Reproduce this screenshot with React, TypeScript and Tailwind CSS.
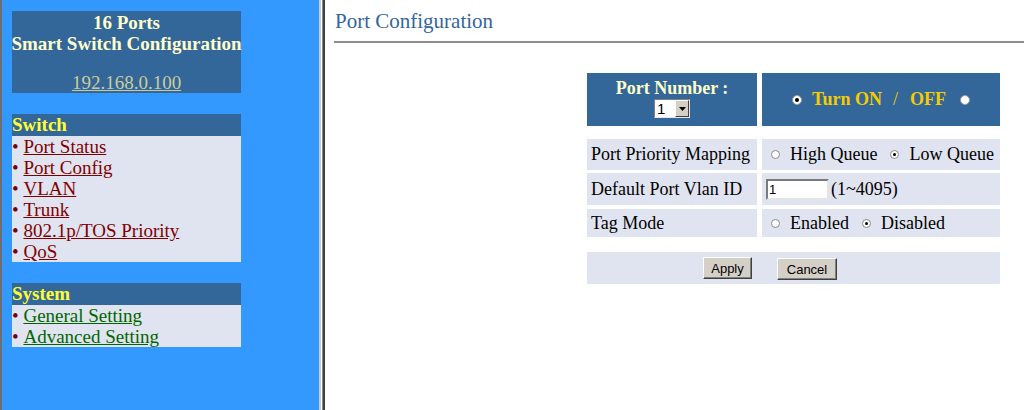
import React from 'react';

interface RadioProps {
  checked?: boolean;
  large?: boolean;
}

const Radio: React.FC<RadioProps> = ({ checked = false, large = false }) => {
  return (
    <span
      className={
        large
          ? 'flex h-[10px] w-[10px] shrink-0 items-center justify-center rounded-full border border-[#9a9a9a] bg-white'
          : 'flex h-[9px] w-[9px] shrink-0 items-center justify-center rounded-full border border-[#8c8c8c] bg-white'
      }
    >
      {checked && (
        <span className={large ? 'h-[4px] w-[4px] rounded-full bg-black' : 'h-[3px] w-[3px] rounded-full bg-black'} />
      )}
    </span>
  );
};

const NavLink: React.FC<{ label: string; color: string }> = ({ label, color }) => (
  <div className="h-[21px] leading-[21px] whitespace-nowrap">
    <span className="text-[#800000]">•&nbsp;</span>
    <a href="#" className={`underline ${color}`}>
      {label}
    </a>
  </div>
);

const Sidebar: React.FC = () => {
  const switchLinks = ['Port Status', 'Port Config', 'VLAN', 'Trunk', '802.1p/TOS Priority', 'QoS'];
  const systemLinks = ['General Setting', 'Advanced Setting'];

  return (
    <aside className="h-full w-[319px] shrink-0 border-l-2 border-[#6e6e6e] bg-[#3399ff] pl-[10px] pt-[11px] text-[19px]">
      {/* Title box */}
      <div className="flex h-[82px] w-[229px] flex-col items-center bg-[#336699] pt-[1px] font-bold leading-[21px] text-[#ffffcc]">
        <div>16 Ports</div>
        <div className="whitespace-nowrap">Smart Switch Configuration</div>
        <a href="#" className="mt-[18px] font-normal text-[#cccc99] underline">
          192.168.0.100
        </a>
      </div>

      {/* Switch menu */}
      <div className="mt-[21px] w-[229px]">
        <div className="h-[22px] bg-[#336699] font-bold leading-[22px] text-[#ffff33]">Switch</div>
        <div className="bg-[#e0e4f0]">
          {switchLinks.map((l) => (
            <NavLink key={l} label={l} color="text-[#800000]" />
          ))}
        </div>
      </div>

      {/* System menu */}
      <div className="mt-[21px] w-[229px]">
        <div className="h-[22px] bg-[#336699] font-bold leading-[22px] text-[#ffff33]">System</div>
        <div className="bg-[#e0e4f0]">
          {systemLinks.map((l) => (
            <NavLink key={l} label={l} color="text-[#006600]" />
          ))}
        </div>
      </div>
    </aside>
  );
};

const FrameDivider: React.FC = () => (
  <div className="flex h-full shrink-0">
    <div className="w-[2px] bg-[#c9cdd3]" />
    <div className="w-[1px] bg-white" />
    <div className="w-[1px] bg-[#8a8a8a]" />
    <div className="w-[2px] bg-[#404040]" />
  </div>
);

const Button: React.FC<{ label: string; width: string }> = ({ label, width }) => (
  <button
    className={`h-[22px] ${width} border border-t-white border-l-white border-r-[#404040] border-b-[#404040] bg-[#d4d0c8] font-['Liberation_Sans',Arial,sans-serif] text-[13px] leading-none text-black shadow-[inset_-1px_-1px_0_#808080]`}
  >
    {label}
  </button>
);

// radio pair used by the light rows
const RadioPair: React.FC<{ first: string; second: string }> = ({ first, second }) => (
  <div className="flex w-[238px] items-center whitespace-nowrap bg-[#e0e4f0] pl-[9px]">
    <Radio />
    <span className="ml-[10px]">{first}</span>
    <span className="ml-[13px]">
      <Radio checked />
    </span>
    <span className="ml-[10px]">{second}</span>
  </div>
);

const PortConfig: React.FC = () => {
  return (
    <main className="h-full flex-1 pl-[9px] pt-[9px]">
      <h1 className="pl-[1px] text-[21px] font-normal leading-[24px] text-[#336699]">Port Configuration</h1>
      <div className="mt-[8px] h-[2px] bg-[#8c8c8c]" />

      <div className="ml-[253px] mt-[30px] w-[413px] text-[18px] text-black">
        {/* Header row */}
        <div className="flex h-[53px] gap-[5px]">
          <div className="flex w-[170px] flex-col items-center bg-[#336699] pt-[5px]">
            <div className="font-bold leading-[20px] text-[#ffffcc]">Port Number :</div>
            <div className="mt-[1px] flex h-[19px] w-[36px] border border-t-[#808080] border-l-[#808080] border-r-[#e8e8e8] border-b-[#e8e8e8] bg-white">
              <span className="flex-1 pl-[2px] font-['Liberation_Sans',Arial,sans-serif] text-[15px] leading-[17px]">1</span>
              <span className="flex w-[14px] items-center justify-center border border-t-white border-l-white border-r-[#404040] border-b-[#404040] bg-[#d4d0c8]">
                <svg width="7" height="4" viewBox="0 0 7 4">
                  <path d="M0 0h7L3.5 4z" fill="#000" />
                </svg>
              </span>
            </div>
          </div>
          <div className="flex w-[238px] items-center justify-center bg-[#336699] font-bold text-[#f5cc00]">
            <Radio large checked />
            <span className="ml-[10px]">Turn ON</span>
            <span className="ml-[11px] font-normal">/</span>
            <span className="ml-[12px]">OFF</span>
            <span className="ml-[14px]">
              <Radio large />
            </span>
          </div>
        </div>

        {/* Priority mapping */}
        <div className="mt-[13px] flex h-[31px] gap-[5px]">
          <div className="flex w-[170px] items-center whitespace-nowrap bg-[#e0e4f0] pl-[4px]">Port Priority Mapping</div>
          <RadioPair first="High Queue" second="Low Queue" />
        </div>

        {/* Vlan ID */}
        <div className="mt-[3px] flex h-[32px] gap-[5px]">
          <div className="flex w-[170px] items-center whitespace-nowrap bg-[#e0e4f0] pl-[4px]">Default Port Vlan ID</div>
          <div className="flex w-[238px] items-center bg-[#e0e4f0] pl-[4px]">
            <input
              defaultValue="1"
              className="h-[21px] w-[63px] border-2 border-t-[#7a7a7a] border-l-[#7a7a7a] border-r-[#e4e4e4] border-b-[#e4e4e4] bg-white pl-[1px] font-['Liberation_Sans',Arial,sans-serif] text-[13px] outline-none"
            />
            <span className="ml-[2px]">(1~4095)</span>
          </div>
        </div>

        {/* Tag mode */}
        <div className="mt-[4px] flex h-[28px] gap-[5px]">
          <div className="flex w-[170px] items-center bg-[#e0e4f0] pl-[4px]">Tag Mode</div>
          <RadioPair first="Enabled" second="Disabled" />
        </div>

        {/* Buttons */}
        <div className="mt-[15px] flex h-[32px] items-center bg-[#e0e4f0] pl-[116px]">
          <Button label="Apply" width="w-[49px]" />
          <span className="ml-[25px]">
            <Button label="Cancel" width="w-[60px]" />
          </span>
        </div>
      </div>
    </main>
  );
};

const App: React.FC = () => {
  return (
    <div className="flex h-[410px] w-[1024px] overflow-hidden bg-white font-['Liberation_Serif','Times_New_Roman',serif]">
      <Sidebar />
      <FrameDivider />
      <PortConfig />
    </div>
  );
};

export default App;
